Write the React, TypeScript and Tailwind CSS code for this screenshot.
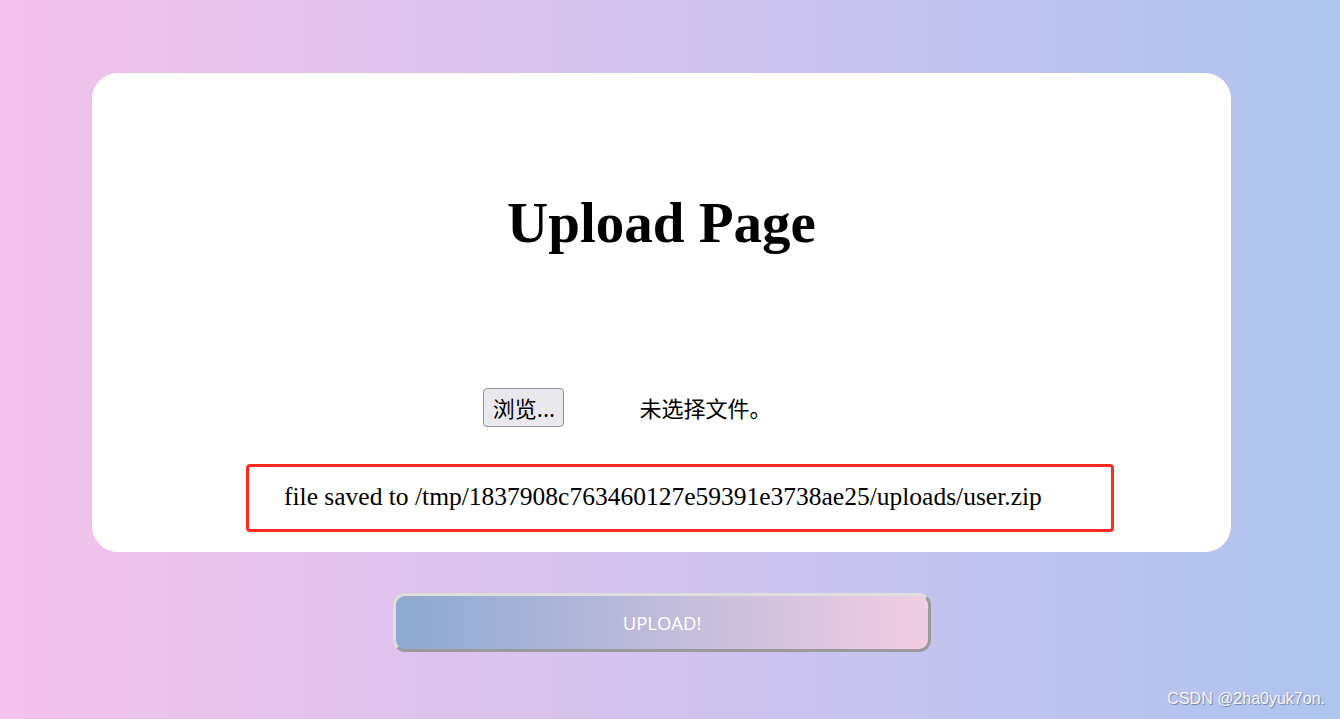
export default function App() {
  return (
    <div className="relative min-h-screen w-full bg-linear-to-r from-[#f2c2eb] to-[#adc4ef] pt-[73px] font-['Liberation_Serif',serif]">
      <div className="ml-[92px] flex h-[479px] w-[1139px] flex-col items-center rounded-[26px] bg-white pt-[118px]">
        <h1 className="text-[57px] font-bold leading-[64px] text-black">Upload Page</h1>
        <div className="mr-[68px] mt-[133px] flex h-[39px] items-center font-['Noto_Sans_CJK_SC',sans-serif] text-[22px] text-black">
          <button className="flex h-[39px] w-[81px] items-center justify-center rounded-[4px] border border-[#8f8f9d] bg-[#e9e9ed] pb-[2px] leading-none">
            浏览...
          </button>
          <span className="ml-[75px] pb-[2px] leading-none">未选择文件。</span>
        </div>
        <div className="ml-[37px] mt-[37px] flex h-[68px] w-[868px] items-center rounded-[4px] border-[3px] border-[#ff2a1f] pl-[35px] pb-[3px]">
          <p className="text-[25.5px] leading-none text-black">
            file saved to /tmp/1837908c763460127e59391e3738ae25/uploads/user.zip
          </p>
        </div>
      </div>
      <div className="ml-[393px] mt-[41px] flex">
        <button className="h-[59px] w-[538px] rounded-[12px] border-[3px] border-t-[#dedede] border-l-[#dedede] border-b-[#9a9a9a] border-r-[#9a9a9a] bg-linear-to-r from-[#8ea9d1] to-[#f0cde2] font-['Open_Sans',sans-serif] text-[18.5px] text-white">
          UPLOAD!
        </button>
      </div>
      <div className="absolute bottom-[8px] right-[15px] font-['Liberation_Sans',sans-serif] text-[16px] text-white/90 [text-shadow:1px_1px_1px_rgba(0,0,0,0.35)]">
        CSDN @2ha0yuk7on.
      </div>
    </div>
  );
}
